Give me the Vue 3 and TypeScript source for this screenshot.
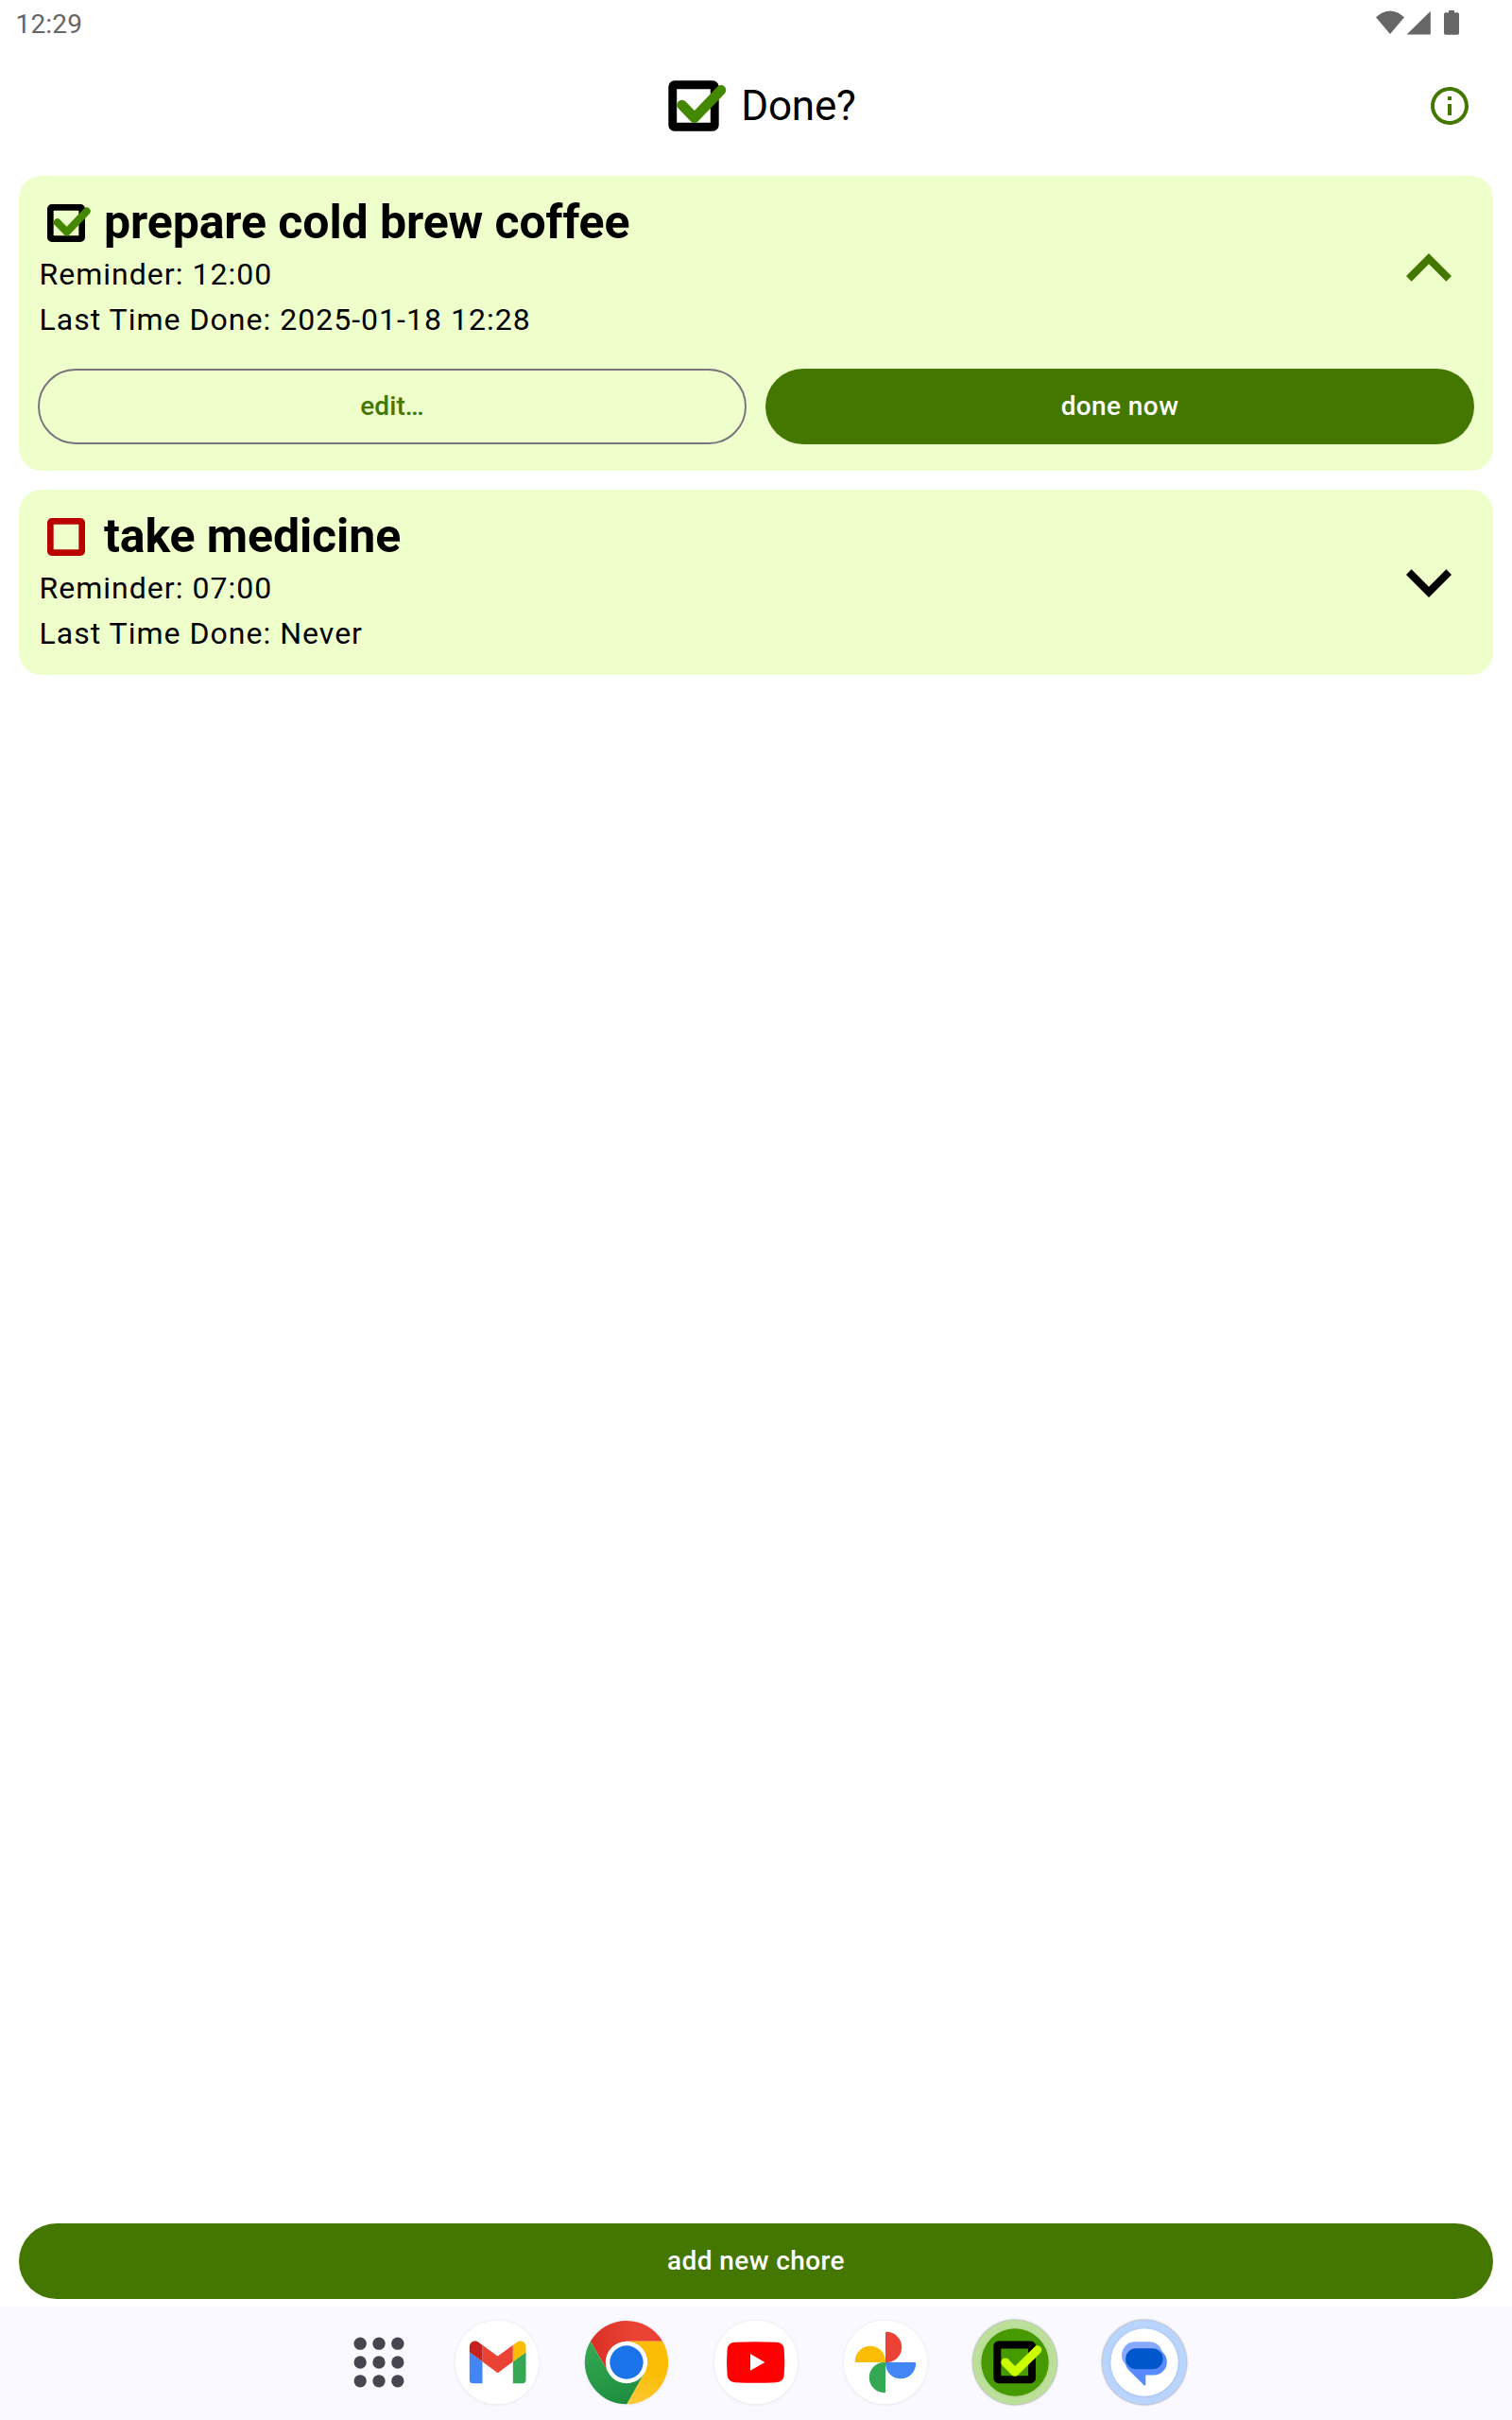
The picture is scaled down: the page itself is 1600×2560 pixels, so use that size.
<script setup lang="ts">
import { ref } from 'vue'

interface Chore {
  id: number
  name: string
  reminder: string
  lastDone: string
  done: boolean
}

const chores: Chore[] = [
  { id: 1, name: 'prepare cold brew coffee', reminder: '12:00', lastDone: '2025-01-18 12:28', done: true },
  { id: 2, name: 'take medicine', reminder: '07:00', lastDone: 'Never', done: false },
]

const expandedId = ref<number | null>(1)

function toggle(id: number): void {
  expandedId.value = expandedId.value === id ? null : id
}

const dots = [75.5, 135, 194.5]
</script>

<template>
  <div class="screen">
    <div class="status">
      <span class="clock">12:29</span>
      <svg class="status-icons" viewBox="0 0 100 48" width="100" height="48">
        <path d="M6 18.200Q21 4.800 36 18.200L21 36Z" />
        <path d="M38.600 36.600 63.800 11.800V36.600Z" />
        <path d="M83 11h6v2.300h3.200q1.800 0 1.800 1.800v20q0 1.700-1.800 1.700h-12.400q-1.800 0-1.800-1.700v-20q0-1.800 1.800-1.800H83Z" />
      </svg>
    </div>

    <header class="bar">
      <div class="brand">
        <svg viewBox="0 0 60 60" width="80" height="80" fill="none">
          <rect x="13.330" y="13.330" width="33.340" height="33.340" rx="1.500" stroke="#000" stroke-width="6.670" />
          <path d="M20.700 29.300 30.700 39.500 51.700 17.500" stroke="#448800" stroke-width="8" stroke-linecap="round" stroke-linejoin="round" />
        </svg>
        <h1>Done?</h1>
      </div>
      <button class="info" aria-label="Info">
        <svg viewBox="0 0 24 24" width="48" height="48">
          <path fill="#447700" d="M11 7h2v2h-2zm0 4h2v6h-2zm1-9C6.480 2 2 6.480 2 12s4.480 10 10 10 10-4.480 10-10S17.520 2 12 2zm0 18c-4.410 0-8-3.590-8-8s3.590-8 8-8 8 3.590 8 8-3.590 8-8 8z" />
        </svg>
      </button>
    </header>

    <main class="list">
      <section v-for="chore in chores" :key="chore.id" class="card">
        <div class="summary" @click="toggle(chore.id)">
          <div class="details">
            <div class="title">
              <svg viewBox="0 0 60 60" width="60" height="60" fill="none">
                <rect x="13.330" y="13.330" width="33.340" height="33.340" rx="1.500" :stroke="chore.done ? '#000' : '#bb0000'" stroke-width="6.670" />
                <path v-if="chore.done" d="M20.700 29.300 30.700 39.500 51.700 17.500" stroke="#448800" stroke-width="8" stroke-linecap="round" stroke-linejoin="round" />
              </svg>
              <h2>{{ chore.name }}</h2>
            </div>
            <p>Reminder: {{ chore.reminder }}</p>
            <p>Last Time Done: {{ chore.lastDone }}</p>
          </div>
          <svg class="chevron" viewBox="0 0 24 24" width="96" height="96">
            <path v-if="expandedId === chore.id" fill="#447700" d="M7.410 15.410 12 10.830l4.590 4.580L18 14l-6-6-6 6z" />
            <path v-else fill="#000" d="M7.410 8.590 12 13.170l4.590-4.580L18 10l-6 6-6-6z" />
          </svg>
        </div>
        <div v-if="expandedId === chore.id" class="actions">
          <button class="btn outlined">edit…</button>
          <button class="btn filled">done now</button>
        </div>
      </section>
    </main>

    <footer class="footer">
      <button class="btn filled">add new chore</button>
    </footer>

    <nav class="dock">
      <svg class="app launcher" viewBox="0 0 270 270">
        <template v-for="y in dots" :key="y">
          <circle v-for="x in dots" :key="x" :cx="x" :cy="y" r="20" fill="#464650" />
        </template>
      </svg>

      <svg class="app" viewBox="0 0 270 270">
        <circle class="disc" cx="135" cy="135" r="133" />
        <path fill="#4285f4" d="M47.500 102.500 88.500 132.500V201.500H58.500Q47.500 201.500 47.500 190.500Z" />
        <path fill="#34a853" d="M226.500 102.500 185.500 132.500V201.500H215.500Q226.500 201.500 226.500 190.500Z" />
        <path fill="#ea4335" d="M88.500 80.500 137 115.500 185.500 80.500V132.500L137 168.500 88.500 132.500Z" />
        <path fill="#c5221f" d="M47.500 102.500V85.500C47.500 70 64 62.500 77 72L88.500 80.500V132.500Z" />
        <path fill="#fbbc04" d="M226.500 102.500V85.500C226.500 70 210 62.500 197 72L185.500 80.500V132.500Z" />
      </svg>

      <svg class="app" viewBox="0 0 270 270">
        <defs>
          <linearGradient id="chrome-red" x1="0" x2="1" y1="0" y2="0">
            <stop offset="0" stop-color="#d93025" />
            <stop offset="0.600" stop-color="#ea4335" />
          </linearGradient>
          <linearGradient id="chrome-green" x1="0.600" x2="0.200" y1="1" y2="0">
            <stop offset="0" stop-color="#1e8e3e" />
            <stop offset="1" stop-color="#34a853" />
          </linearGradient>
          <linearGradient id="chrome-yellow" x1="0.300" x2="0.600" y1="1" y2="0">
            <stop offset="0" stop-color="#fcc934" />
            <stop offset="0.600" stop-color="#fbbc04" />
          </linearGradient>
        </defs>
        <circle class="disc" cx="135" cy="135" r="132" />
        <path fill="url(#chrome-red)" d="M20.500 68A133 133 0 0 1 249.500 68.500H135L78 168Z" />
        <path fill="url(#chrome-yellow)" d="M249.500 68.500A133 133 0 0 1 135.500 268L192 168 135 68.500Z" />
        <path fill="url(#chrome-green)" d="M135.500 268A133 133 0 0 1 20.500 68L78 168 135 190 192 168Z" />
        <circle cx="135" cy="135" r="66.500" fill="#fff" />
        <circle cx="135" cy="135" r="53" fill="#1a73e8" />
      </svg>

      <svg class="app" viewBox="0 0 270 270">
        <circle class="disc" cx="135" cy="135" r="133" />
        <path fill="#f00" d="M68 71.500Q134 67.500 200 71.500Q221 73 224 92Q228 135 224 178Q221 197 200 198.500Q134 202.500 68 198.500Q47 197 44 178Q40 135 44 92Q47 73 68 71.500Z" />
        <path fill="#fff" d="M117 108 163 135 117 161.500Z" />
      </svg>

      <svg class="app" viewBox="0 0 270 270">
        <circle class="disc" cx="135" cy="135" r="133" />
        <g>
          <path fill="#ea4335" d="M135 135V41.500q0-3 3-3A48.250 48.250 0 0 1 139 135Z" />
          <path fill="#4285f4" transform="rotate(90 135 135)" d="M135 135V41.500q0-3 3-3A48.250 48.250 0 0 1 139 135Z" />
          <path fill="#34a853" transform="rotate(180 135 135)" d="M135 135V41.500q0-3 3-3A48.250 48.250 0 0 1 139 135Z" />
          <path fill="#fbbc04" transform="rotate(270 135 135)" d="M135 135V41.500q0-3 3-3A48.250 48.250 0 0 1 139 135Z" />
        </g>
      </svg>

      <svg class="app" viewBox="0 0 270 270">
        <circle class="ring" cx="135" cy="135" r="134" fill="#bce09a" />
        <circle class="core" cx="135" cy="135" r="107" fill="#469a00" />
        <rect x="79" y="79.500" width="110" height="110" rx="4" fill="none" stroke="#000" stroke-width="24" />
        <path d="M104.500 135 135 166 206.500 95.500" fill="none" stroke="#cf0" stroke-width="27" stroke-linecap="round" stroke-linejoin="round" />
      </svg>

      <svg class="app" viewBox="0 0 270 270">
        <circle class="ring" cx="135" cy="135" r="134" fill="#b9d5fe" />
        <circle class="core" cx="135" cy="135" r="107" fill="#fff" />
        <path fill="#86a9ff" d="M105 69.500H150C172 69.500 188 83 193 105L80 147C68 138 63 126 63 112C63 88 82 69.500 105 69.500Z" />
        <path fill="#598bff" d="M190 100C201 109 206.500 120 206.500 134A41.500 41.500 0 0 1 165 175.500H139V206.500Q138 210.500 134 207.500L84 158C77 151 75 143 75 132Z" />
        <rect x="75.500" y="90.500" width="118.500" height="66" rx="33" fill="#0057cc" />
      </svg>
    </nav>
  </div>
</template>

<style>
body {
  margin: 0;
  background: #fff;
}
</style>

<style scoped>
.screen {
  display: flex;
  flex-direction: column;
  width: 1600px;
  height: 2560px;
  background: #fff;
  color: #000;
  font-family: Roboto, "Liberation Sans", sans-serif;
}

svg {
  display: block;
  flex: none;
}

button {
  border: 0;
  padding: 0;
  margin: 0;
  background: none;
  font-family: inherit;
}

.status {
  display: flex;
  justify-content: space-between;
  box-sizing: border-box;
  height: 48px;
  padding: 0 50px 0 16.5px;
}

.clock {
  font-size: 28px;
  line-height: 52px;
  letter-spacing: 0.2px;
  color: #666;
}

.status-icons {
  fill: #666;
}

.bar {
  display: grid;
  grid-template-columns: 1fr auto 1fr;
  align-items: center;
  height: 128px;
}

.brand {
  display: flex;
  grid-column: 2;
  align-items: center;
  gap: 10px;
}

h1 {
  margin: 0;
  font-size: 44px;
  font-weight: 400;
  line-height: 56px;
  letter-spacing: -0.2px;
}

.info {
  justify-self: end;
  margin-right: 42px;
}

.list {
  display: flex;
  flex: 1;
  flex-direction: column;
  gap: 20px;
  padding: 10px 20px;
}

.card {
  padding: 20px;
  border-radius: 24px;
  background: #eeffcc;
}

.summary {
  display: flex;
  align-items: center;
  justify-content: space-between;
}

.title {
  display: flex;
  align-items: center;
  gap: 10px;
  height: 60px;
}

h2 {
  margin: 0;
  padding-bottom: 2px;
  font-size: 50px;
  font-weight: 700;
  line-height: 58px;
  letter-spacing: -0.1px;
}

p {
  margin: 0;
  padding-left: 1.5px;
  font-size: 32px;
  line-height: 48px;
  letter-spacing: 1.02px;
}

.actions {
  display: grid;
  grid-template-columns: 1fr 1fr;
  gap: 20px;
  padding: 28px 0 8px;
}

.btn {
  box-sizing: border-box;
  flex: 1;
  height: 80px;
  border-radius: 40px;
  font-size: 28px;
  font-weight: 500;
  line-height: 40px;
  letter-spacing: 0.4px;
}

.outlined {
  border: 2px solid #79747e;
  color: #447700;
  letter-spacing: 0.1px;
}

.filled {
  background: #447700;
  color: #fff;
}

.footer {
  display: flex;
  padding: 0 20px 8px;
}

.dock {
  display: flex;
  align-items: center;
  gap: 47px;
  box-sizing: border-box;
  height: 120px;
  padding: 0 0 1.4px 356.4px;
  background: #faf9ff;
}

.app {
  width: 90px;
  height: 90px;
  overflow: visible;
}

.launcher {
  margin-right: -12px;
}

.disc {
  fill: #fff;
  filter: drop-shadow(0 1px 4px rgba(0, 0, 0, 0.1));
}

.ring {
  filter: drop-shadow(0 0 3px rgba(0, 0, 0, 0.5));
}

.core {
  filter: drop-shadow(0 1px 5px rgba(0, 0, 0, 0.12));
}
</style>
